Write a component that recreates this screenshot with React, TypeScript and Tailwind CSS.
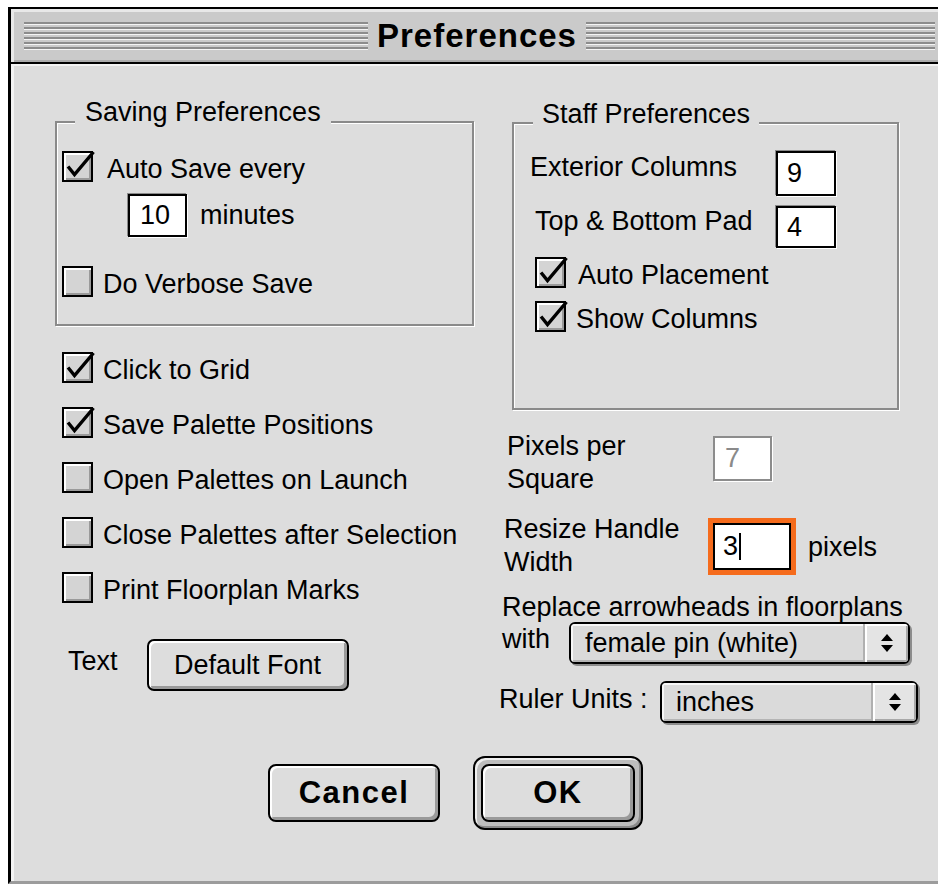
import type { ReactNode } from 'react';

const sans = "font-['Liberation_Sans',Arial,sans-serif]";

function Stripes({ className }: { className: string }) {
  return (
    <div className={`flex flex-col gap-[2px] ${className}`}>
      {[0, 1, 2, 3, 4, 5].map((i) => (
        <div key={i} className="h-[3px] border-t-2 border-b border-t-[#8c8c8c] border-b-[#f4f4f4]" />
      ))}
    </div>
  );
}

function CheckBox({ checked }: { checked?: boolean }) {
  return (
    <span className="relative block h-[31px] w-[31px] shrink-0 border-2 border-black bg-[#d4d4d4] shadow-[inset_2px_2px_0_#ffffff,inset_-2px_-2px_0_#9a9a9a]">
      {checked && (
        <svg className="absolute -left-[2px] -top-[2px] overflow-visible" width="31" height="31" viewBox="0 0 31 31">
          <path d="M6 15.5 L12.5 23.5 L31.5 1" fill="none" stroke="#000" strokeWidth="3.4" strokeLinejoin="miter" />
        </svg>
      )}
    </span>
  );
}

// row is exactly as tall as the box; the label sits a little low like the old toolbox did
function Check({ label, checked, gap = 'gap-[10px]' }: { label: string; checked?: boolean; gap?: string }) {
  return (
    <div className={`flex h-[31px] items-start ${gap}`}>
      <CheckBox checked={checked} />
      <span className="mt-[3px] whitespace-nowrap leading-[31px]">{label}</span>
    </div>
  );
}

function Field({ children, className }: { children: ReactNode; className: string }) {
  return (
    <div className={`flex shrink-0 items-center border-2 border-black bg-white shadow-[-1px_-1px_0_#8a8a8a,1px_1px_0_#ffffff] ${className}`}>
      {children}
    </div>
  );
}

function UpDown() {
  return (
    <svg width="14" height="20" viewBox="0 0 14 20">
      <path d="M7 1 L13 8 L1 8 Z" fill="#000" />
      <path d="M1 12 L13 12 L7 19 Z" fill="#000" />
    </svg>
  );
}

function Popup({ value, className }: { value: string; className: string }) {
  return (
    <div className={`flex h-[42px] shrink-0 overflow-hidden rounded-[6px] border-2 border-black bg-[#dadada] shadow-[2px_2px_0_#8c8c8c] ${className}`}>
      <div className="flex flex-1 items-center pl-[14px] shadow-[inset_2px_2px_0_#f6f6f6,inset_0_-2px_0_#b4b4b4]">{value}</div>
      <div className="flex w-[45px] items-center justify-center border-l-2 border-[#b0b0b0] bg-[#e4e4e4] shadow-[inset_2px_2px_0_#ffffff,inset_-2px_-2px_0_#a8a8a8]">
        <UpDown />
      </div>
    </div>
  );
}

function GroupTitle({ children, className }: { children: ReactNode; className: string }) {
  return <div className={`w-fit whitespace-nowrap bg-[#dddddd] leading-[31px] ${className}`}>{children}</div>;
}

export default function App() {
  return (
    <div className={`min-h-[884px] bg-white pl-[8px] pt-[7px] text-[27px] text-black ${sans}`}>
      <div className="flex h-[877px] flex-col border-l-[3px] border-t-2 border-b-[3px] border-l-black border-t-black border-b-[#9c9c9c] bg-[#dddddd]">
        {/* title bar */}
        <div className="flex h-[55px] shrink-0 items-center border-b-2 border-black bg-[#cacaca] pl-[13px] pr-[3px] shadow-[inset_3px_3px_0_#e8e8e8,inset_0_-2px_0_#ababab]">
          <Stripes className="w-[344px]" />
          <h1 className="mx-[9px] text-[33px] font-bold leading-none tracking-[1px]">Preferences</h1>
          <Stripes className="flex-1" />
        </div>

        <div className="flex flex-1 flex-col shadow-[inset_3px_2px_0_#f3f3f3]">
          <div className="flex">
            {/* left column */}
            <div className="ml-[44px] flex w-[419px] flex-col pt-[57px]">
              <div className="flex h-[205px] flex-col border-2 border-[#8a8a8a] shadow-[1px_1px_0_#ffffff,inset_1px_1px_0_#ffffff]">
                <GroupTitle className="-mt-[26px] ml-[18px] px-[10px]">Saving Preferences</GroupTitle>
                <div className="mt-[23px] pl-[5px]">
                  <Check label="Auto Save every" checked gap="gap-[14px]" />
                </div>
                <div className="ml-[71px] mt-[12px] flex items-center gap-[13px]">
                  <Field className="h-[43px] w-[59px] pl-[10px]">10</Field>
                  <span className="leading-[31px]">minutes</span>
                </div>
                <div className="mt-[29px] pl-[5px]">
                  <Check label="Do Verbose Save" />
                </div>
              </div>

              <div className="mt-[26px] flex flex-col gap-[24px] pl-[7px]">
                <Check label="Click to Grid" checked />
                <Check label="Save Palette Positions" checked />
                <Check label="Open Palettes on Launch" />
                <Check label="Close Palettes after Selection" />
                <Check label="Print Floorplan Marks" />
              </div>

              <div className="mt-[36px] flex items-start pl-[13px]">
                <span className="mt-[7px] leading-[31px]">Text</span>
                <button className="ml-[29px] flex h-[52px] w-[202px] items-center justify-center rounded-[7px] border-2 border-black bg-[#dddddd] shadow-[inset_2px_2px_0_#ffffff,inset_-3px_-3px_0_#9a9a9a]">
                  Default Font
                </button>
              </div>
            </div>

            {/* right column */}
            <div className="ml-[24px] flex w-[420px] flex-col pt-[58px]">
              <div className="ml-[14px] flex h-[288px] w-[387px] flex-col border-2 border-[#8a8a8a] shadow-[1px_1px_0_#ffffff,inset_1px_1px_0_#ffffff]">
                <GroupTitle className="-mt-[25px] ml-[19px] px-[9px]">Staff Preferences</GroupTitle>
                <div className="mt-[21px] flex items-start pl-[16px]">
                  <span className="mt-px w-[246px] leading-[31px]">Exterior Columns</span>
                  <Field className="h-[45px] w-[60px] pl-[9px]">9</Field>
                </div>
                <div className="mt-[10px] flex items-start pl-[21px]">
                  <span className="w-[241px] leading-[31px]">Top &amp; Bottom Pad</span>
                  <Field className="h-[42px] w-[60px] pl-[9px]">4</Field>
                </div>
                <div className="mt-[9px] pl-[21px]">
                  <Check label="Auto Placement" checked gap="gap-[12px]" />
                </div>
                <div className="mt-[13px] pl-[21px]">
                  <Check label="Show Columns" checked />
                </div>
              </div>

              <div className="mt-[20px] flex items-start pl-[9px]">
                <span className="w-[206px] leading-[33px]">
                  Pixels per
                  <br />
                  Square
                </span>
                <div className="mt-[6px] flex h-[45px] w-[59px] items-center border-2 border-[#8c8c8c] bg-white pl-[10px] text-[#8a8a8a] shadow-[1px_1px_0_#ffffff]">
                  7
                </div>
              </div>

              <div className="mt-[17px] flex items-start pl-[6px]">
                <span className="w-[204px] leading-[33px]">
                  Resize Handle
                  <br />
                  Width
                </span>
                <div className="mt-[5px] h-[57px] w-[88px] bg-[#f56b1c] p-[5px]">
                  <div className="flex h-full items-center border-2 border-black bg-white pl-[8px]">
                    3<span className="ml-px h-[27px] w-[2px] bg-black" />
                  </div>
                </div>
                <span className="ml-[12px] mt-[19px] leading-[31px]">pixels</span>
              </div>

              <div className="mt-[13px] whitespace-nowrap pl-[4px] leading-[31px]">Replace arrowheads in floorplans</div>
              <div className="-mt-px flex items-start pl-[4px]">
                <span className="mt-[2px] w-[67px] leading-[31px]">with</span>
                <Popup value="female pin (white)" className="w-[341px]" />
              </div>

              <div className="mt-[17px] flex items-start pl-px">
                <span className="mt-[3px] w-[161px] whitespace-nowrap leading-[31px]">Ruler Units :</span>
                <Popup value="inches" className="w-[258px]" />
              </div>
            </div>
          </div>

          {/* dialog buttons */}
          <div className="mt-[33px] flex items-center pl-[257px] text-[31px] font-bold tracking-[1.5px]">
            <button className="flex h-[58px] w-[172px] items-center justify-center rounded-[8px] border-2 border-black bg-[#dddddd] shadow-[inset_2px_2px_0_#ffffff,inset_-3px_-3px_0_#9a9a9a]">
              Cancel
            </button>
            <div className="ml-[33px] rounded-[12px] border-2 border-black bg-[#bdbdbd] p-[6px] shadow-[inset_2px_2px_0_#eeeeee,inset_-2px_-2px_0_#8a8a8a]">
              <button className="flex h-[58px] w-[154px] items-center justify-center rounded-[8px] border-2 border-black bg-[#dddddd] shadow-[inset_2px_2px_0_#ffffff,inset_-3px_-3px_0_#9a9a9a]">
                OK
              </button>
            </div>
          </div>
        </div>
      </div>
    </div>
  );
}
